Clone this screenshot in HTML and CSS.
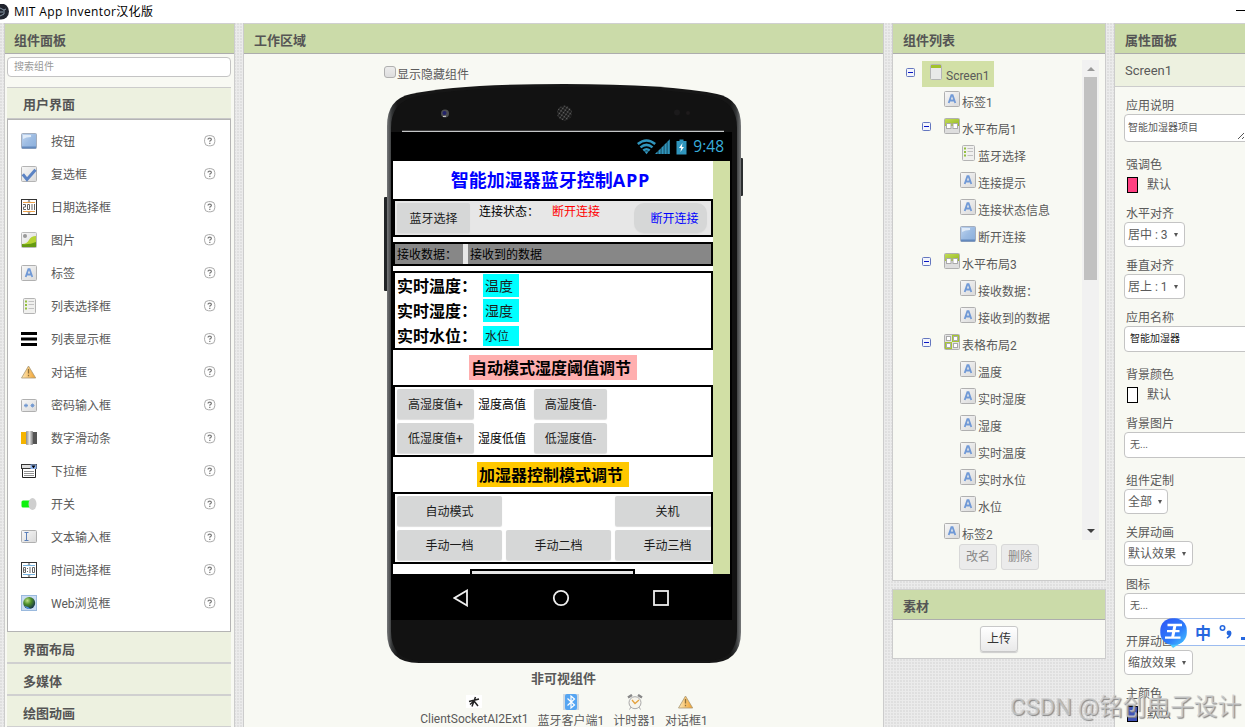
FILE: index.html
```html
<!DOCTYPE html>
<html lang="zh-CN">
<head>
<meta charset="utf-8">
<title>MIT App Inventor汉化版</title>
<link rel="stylesheet" href="styles.css">
</head>
<body>
<svg class="defs" width="0" height="0">
  <defs>
    <linearGradient id="gBlue" x1="0" y1="0" x2="1" y2="1"><stop offset="0" stop-color="#c3d7f0"/><stop offset=".5" stop-color="#9dbce3"/><stop offset="1" stop-color="#8aaedb"/></linearGradient>
    <linearGradient id="gGrey" x1="0" y1="0" x2="1" y2="1"><stop offset="0" stop-color="#f8f8f8"/><stop offset="1" stop-color="#d9d9d9"/></linearGradient>
    <linearGradient id="gWarn" x1="0" y1="0" x2="1" y2="0"><stop offset="0" stop-color="#ffe9b8"/><stop offset="1" stop-color="#f0a02c"/></linearGradient>
    <linearGradient id="gGreen" x1="0" y1="0" x2="1" y2="1"><stop offset="0" stop-color="#c2dc58"/><stop offset="1" stop-color="#95b91e"/></linearGradient>
    <linearGradient id="gKnob" x1="0" y1="0" x2="1" y2="0"><stop offset="0" stop-color="#8a8a8a"/><stop offset=".5" stop-color="#e6e6e6"/><stop offset="1" stop-color="#777"/></linearGradient>
    <radialGradient id="gGlobe" cx=".35" cy=".3" r=".8"><stop offset="0" stop-color="#bfe08a"/><stop offset=".4" stop-color="#4d8f28"/><stop offset="1" stop-color="#0c2450"/></radialGradient>
    <symbol id="i-button" viewBox="0 0 16 16"><rect x=".5" y=".5" width="15" height="15" rx="1" fill="url(#gBlue)" stroke="#a3adbd"/><path d="M1 14.5h14" stroke="#6389bd" stroke-width="2"/><path d="M2 2h8v2q-5 0-8 2z" fill="#e0ebf8"/></symbol>
    <symbol id="i-check" viewBox="0 0 16 16"><rect x=".5" y=".5" width="15" height="15" rx="1" fill="url(#gGrey)" stroke="#b4b4b4"/><path d="M1.8 8.2l4.2 5.2 8.5-9.6" fill="none" stroke="#5b83c4" stroke-width="3"/></symbol>
    <symbol id="i-date" viewBox="0 0 16 16"><rect x=".5" y=".5" width="15" height="15" fill="#fff" stroke="#333"/><path d="M2 3.5h12M2 12.500h12" stroke="#eba04a"/><path d="M6.500 2.500h3L8 1zM6.500 13.500h3L8 15z" fill="#444"/><path d="M2 5.500h2.500V8H2.500v2.500H5M6.500 5.500h2v5h-2zM11 5v6M13.500 5v6" fill="none" stroke="#666"/></symbol>
    <symbol id="i-time" viewBox="0 0 16 16"><rect x=".5" y=".5" width="15" height="15" fill="#fff" stroke="#333"/><path d="M2 3.500h12M2 12.500h12" stroke="#74b3e0"/><path d="M6.500 2.500h3L8 1zM6.500 13.500h3L8 15z" fill="#444"/><path d="M2.500 5.500h2v5h-2zM2.500 8h2M6.500 6v1M6.500 9v1M9 5v6M11.500 5.500h2v5h-2z" fill="none" stroke="#666"/></symbol>
    <symbol id="i-image" viewBox="0 0 16 16"><rect x=".5" y=".5" width="15" height="15" rx="1" fill="url(#gGrey)" stroke="#bbb"/><circle cx="4" cy="4" r="2" fill="#999"/><path d="M1 12q5 0 7-4t7-4v11H1z" fill="#b5d334"/><path d="M1 12q7 1 14-2v5H1z" fill="#659a13"/></symbol>
    <symbol id="i-label" viewBox="0 0 16 16"><rect x=".5" y=".5" width="15" height="15" rx="1" fill="url(#gGrey)" stroke="#b0b0b0"/><path d="M4.700 12L7.400 4.200h1.200L11.300 12M5.800 9.500h4.500" fill="none" stroke="#7099d6" stroke-width="1.800"/></symbol>
    <symbol id="i-list" viewBox="0 0 16 16"><rect x="2.500" y=".5" width="12" height="15" rx="1" fill="#f0f0ee" stroke="#b4b4b4"/><path d="M4 3.500h2M4 7h2M4 10.500h2" stroke="#93bf3e" stroke-width="2"/><path d="M7.500 3.500H13M7.500 6.500H13M7.500 10.500H13" stroke="#c2c2c2"/></symbol>
    <symbol id="i-lines" viewBox="0 0 16 16"><path d="M0 2.500h16M0 8h16M0 13.500h16" stroke="#000" stroke-width="3"/></symbol>
    <symbol id="i-warn" viewBox="0 0 16 16"><path d="M7.500 2L14.700 14H.5z" fill="url(#gWarn)" stroke="#a99873" stroke-width=".8"/><path d="M7.500 5v4.500M7.500 10.800v1.500" stroke="#8d713d" stroke-width="1.300"/></symbol>
    <symbol id="i-pass" viewBox="0 0 16 16"><rect x=".5" y="2.500" width="15" height="12" rx="1" fill="url(#gGrey)" stroke="#b0b0b0"/><path d="M3 8.500h4M5 6.500v4M3.600 7l2.800 3M6.400 7l-2.800 3M9.500 8.500h4M11.500 6.500v4M10.100 7l2.800 3M12.900 7l-2.800 3" stroke="#6e96d0" stroke-width=".9"/></symbol>
    <symbol id="i-slider" viewBox="0 0 16 16"><rect y="2" width="6" height="12" fill="#f5b400"/><rect x="10" y="2" width="6" height="12" fill="#555"/><rect x="5" y="1" width="7" height="14" rx="1" fill="url(#gKnob)"/></symbol>
    <symbol id="i-spin" viewBox="0 0 16 16"><rect x=".5" y="1.500" width="15" height="4" fill="#ddd" stroke="#333"/><rect x="9.500" y="1.500" width="6" height="4.500" fill="#8eb3ee"/><path d="M10.500 2.500h4l-2 3z" fill="#000"/><path d="M1.500 6v8.500h13V6" fill="#fff" stroke="#222"/><path d="M3 8.500h10M3 10.500h10M3 12.500h10" stroke="#777" stroke-width=".8"/></symbol>
    <symbol id="i-switch" viewBox="0 0 16 16"><rect x=".5" y="4.500" width="10" height="7" rx="1.500" fill="#0cf20c"/><ellipse cx="11.500" cy="8" rx="4" ry="6" fill="#cfcfcf"/></symbol>
    <symbol id="i-text" viewBox="0 0 16 16"><rect x=".5" y="1.500" width="15" height="12" rx="1" fill="url(#gGrey)" stroke="#b0b0b0"/><path d="M3.500 3.500h4M3.500 11.500h4M5.500 3.500v8" stroke="#5b7fb8" fill="none"/></symbol>
    <symbol id="i-web" viewBox="0 0 16 16"><rect x=".5" y=".5" width="15" height="15" fill="#c9dcf3" stroke="#9ab9dd"/><circle cx="8.200" cy="8" r="6" fill="url(#gGlobe)"/><path d="M3.500 11q4 .5 6 3-4 .6-6-3z" fill="#4f8ddd"/></symbol>
    <symbol id="i-screen" viewBox="0 0 16 16"><rect x="2.500" y=".5" width="11" height="15" rx="1" fill="#e9e9e9" stroke="#b4b4b4"/><rect x="3" y="1" width="10" height="3" fill="#a2c32b"/></symbol>
    <symbol id="i-horiz" viewBox="0 0 16 16"><rect x=".5" y=".5" width="15" height="15" rx="1" fill="#dedede" stroke="#b0b0b0"/><rect x="1" y="1" width="14" height="7" fill="url(#gGreen)"/><rect x="2.500" y="5.500" width="4.500" height="5" fill="#fff" stroke="#aaa"/><rect x="9" y="5.500" width="4.500" height="5" fill="#fff" stroke="#aaa"/></symbol>
    <symbol id="i-table" viewBox="0 0 16 16"><rect x=".5" y=".5" width="15" height="15" rx="1" fill="#e2e2e2" stroke="#b0b0b0"/><path d="M8 1h7v7H8zM1 8h7v7H1z" fill="#a6c832"/><g fill="#fff" stroke="#aaa"><rect x="2.500" y="2.500" width="4" height="4"/><rect x="9.500" y="2.500" width="4" height="4"/><rect x="2.500" y="9.500" width="4" height="4"/><rect x="9.500" y="9.500" width="4" height="4"/></g></symbol>
    <symbol id="i-help" viewBox="0 0 12 12"><rect x=".6" y=".6" width="10.200" height="10.200" rx="4" fill="#fff" stroke="#aaa"/><path d="M4 4.600q0-1.500 1.700-1.500t1.700 1.300q0 .8-1.500 1.700v.7M5.800 7.700v1.200" fill="none" stroke="#777" stroke-width="1.200"/></symbol>
    <symbol id="i-minus" viewBox="0 0 9 9"><rect x=".5" y=".5" width="8" height="8" rx="1" fill="#f3f5fb" stroke="#6577bf"/><path d="M2 4.500h5" stroke="#0a17c4"/></symbol>
  </defs>
</svg>

<header class="titlebar">
  <svg class="app-logo" width="12" height="16" viewBox="0 0 12 16"><circle cx="1" cy="7.500" r="8" fill="#20242e"/><path d="M0 4l4 2v4l-4 2M4 6l2-1M0 8h3" fill="none" stroke="#8595a4"/></svg>
  <span>MIT App Inventor汉化版</span>
  <i class="minimise"></i>
</header>

<main class="workspace">
  <section class="panel palette">
    <h2 class="panel-head">组件面板</h2>
    <div class="search">搜索组件</div>
    <h3 class="category open">用户界面</h3>
    <ul class="components">
      <li><svg><use href="#i-button"/></svg><span>按钮</span><svg class="help"><use href="#i-help"/></svg></li>
      <li><svg><use href="#i-check"/></svg><span>复选框</span><svg class="help"><use href="#i-help"/></svg></li>
      <li><svg><use href="#i-date"/></svg><span>日期选择框</span><svg class="help"><use href="#i-help"/></svg></li>
      <li><svg><use href="#i-image"/></svg><span>图片</span><svg class="help"><use href="#i-help"/></svg></li>
      <li><svg><use href="#i-label"/></svg><span>标签</span><svg class="help"><use href="#i-help"/></svg></li>
      <li><svg><use href="#i-list"/></svg><span>列表选择框</span><svg class="help"><use href="#i-help"/></svg></li>
      <li><svg><use href="#i-lines"/></svg><span>列表显示框</span><svg class="help"><use href="#i-help"/></svg></li>
      <li><svg><use href="#i-warn"/></svg><span>对话框</span><svg class="help"><use href="#i-help"/></svg></li>
      <li><svg><use href="#i-pass"/></svg><span>密码输入框</span><svg class="help"><use href="#i-help"/></svg></li>
      <li><svg><use href="#i-slider"/></svg><span>数字滑动条</span><svg class="help"><use href="#i-help"/></svg></li>
      <li><svg><use href="#i-spin"/></svg><span>下拉框</span><svg class="help"><use href="#i-help"/></svg></li>
      <li><svg><use href="#i-switch"/></svg><span>开关</span><svg class="help"><use href="#i-help"/></svg></li>
      <li><svg><use href="#i-text"/></svg><span>文本输入框</span><svg class="help"><use href="#i-help"/></svg></li>
      <li><svg><use href="#i-time"/></svg><span>时间选择框</span><svg class="help"><use href="#i-help"/></svg></li>
      <li><svg><use href="#i-web"/></svg><span>Web浏览框</span><svg class="help"><use href="#i-help"/></svg></li>
    </ul>
    <h3 class="category">界面布局</h3>
    <h3 class="category">多媒体</h3>
    <h3 class="category">绘图动画</h3>
  </section>

  <section class="panel viewer">
    <h2 class="panel-head">工作区域</h2>
    <div class="show-hidden"><i class="checkbox"></i><span>显示隐藏组件</span></div>
    <div class="phone">
      <svg class="phone-body" width="360" height="580" viewBox="0 0 360 580">
        <defs>
          <linearGradient id="gEdge" x1="0" y1="0" x2="1" y2="0"><stop offset="0" stop-color="#77797a"/><stop offset=".014" stop-color="#333536"/><stop offset=".03" stop-color="#161616"/><stop offset=".97" stop-color="#161616"/><stop offset=".986" stop-color="#333536"/><stop offset="1" stop-color="#77797a"/></linearGradient>
          <pattern id="pGrille" width="3" height="3" patternUnits="userSpaceOnUse" patternTransform="rotate(35)"><rect width="3" height="3" fill="#111"/><circle cx="1.500" cy="1.500" r=".9" fill="#6c6c6c"/></pattern>
        </defs>
        <rect x="0" y="113" width="5" height="94" rx="1" fill="#222526"/>
        <rect x="354" y="74" width="5" height="38" rx="1" fill="#2a2d2e"/>
        <path d="M3 42Q3 15 27 10Q75 0 180 0Q285 0 333 10Q357 15 357 42V548Q357 579 325 579H35Q3 579 3 548Z" fill="url(#gEdge)"/>
        <path d="M7 44Q7 19 30 13Q78 3 180 3Q282 3 330 13Q353 19 353 44V547Q353 577 322 577H38Q7 577 7 547Z" fill="#121212"/>
        <path d="M18 47.500H340" stroke="#c5c7c8" stroke-width="1.500"/>
        <circle cx="61" cy="29.500" r="4" fill="#4d4e50"/><circle cx="60.500" cy="29" r="2" fill="#22226a"/><path d="M59 32.500l3-.2" stroke="#ccc"/>
        <circle cx="180.500" cy="29" r="7.500" fill="url(#pGrille)"/>
        <circle cx="293" cy="28.500" r="3" fill="#1b1a1b"/><circle cx="304" cy="29" r="2" fill="#1e1b1c"/>
      </svg>
      <div class="screen-stack">
        <div class="status">
          <svg width="50" height="16" viewBox="0 0 50 16"><g fill="none" stroke="#3095bd" stroke-width="2.500"><path d="M.8 5q8.700-7 17.400 0M3.500 8.400q6-5 12 0M6.300 11.500q3.200-2.600 6.400 0"/></g><path d="M7.300 12.300h4.400l-2.200 2.900z" fill="#3095bd"/><g fill="#3095bd"><path d="M18 15l2.700-2.700V15zM21.300 11.700l2.500-2.500V15h-2.500zM24.300 8.700l2.500-2.500V15h-2.500zM27.300 5.700l2.500-2.500V15h-2.500zM30.300 2.700l2.500-2.500V15h-2.500z"/><path d="M39.500 2h3V.5h4V2h3v13.500h-10z"/></g><path d="M45.500 4l-3.500 5h2.200l-.8 4L47 8h-2.200z" fill="#fff"/></svg>
          <span>9:48</span>
        </div>
        <div class="form">
          <div class="canvas">
            <div class="app-title">智能加湿器蓝牙控制<span>APP</span></div>
            <div class="box connect">
              <span class="btn w73">蓝牙选择</span><span class="state">连接状态：</span><span class="state off">断开连接</span><span class="btn round">断开连接</span>
            </div>
            <div class="box receive"><span class="rx-label">接收数据：</span><span class="rx-value">接收到的数据</span></div>
            <div class="box readings">
              <div><b>实时温度：</b><span class="value">温度</span></div>
              <div><b>实时湿度：</b><span class="value">湿度</span></div>
              <div><b>实时水位：</b><span class="value small">水位</span></div>
            </div>
            <div class="tag pink">自动模式湿度阈值调节</div>
            <div class="box grid thresholds">
              <span class="btn">高湿度值+</span><span class="plain">湿度高值</span><span class="btn">高湿度值-</span>
              <span class="btn">低湿度值+</span><span class="plain">湿度低值</span><span class="btn">低湿度值-</span>
            </div>
            <div class="tag amber">加湿器控制模式调节</div>
            <div class="box grid modes">
              <span class="btn">自动模式</span><span></span><span class="btn">关机</span>
              <span class="btn">手动一档</span><span class="btn">手动二档</span><span class="btn">手动三档</span>
            </div>
            <div class="box cut"></div>
          </div>
        </div>
        <div class="nav">
          <svg width="16" height="18" viewBox="0 0 16 18"><path d="M14 1.500v15L1.500 9z"/></svg>
          <svg width="18" height="18" viewBox="0 0 18 18"><circle cx="9" cy="9" r="7.200"/></svg>
          <svg width="16" height="18" viewBox="0 0 16 18"><rect x="1" y="2" width="14" height="14"/></svg>
        </div>
      </div>
    </div>
    <div class="nonvisible-title">非可视组件</div>
    <div class="nonvisible">
      <div class="ext"><svg viewBox="0 0 16 16"><rect y="1" width="16" height="13" fill="#fff"/><path d="M3 7.500l10-2.500M9.500 3L8 7l-2 5.500M8 7l4 5M4 10.500L8 7" stroke="#222" stroke-width="1.500" fill="none"/></svg><span>ClientSocketAI2Ext1</span></div>
      <div><svg viewBox="0 0 16 16"><rect width="16" height="16" fill="#cfd9e2"/><rect x="2" width="12" height="16" rx="2" fill="#55a5f2"/><path d="M4.500 4.500l7 6.500L8 14V2l3.500 3-7 6.500" fill="none" stroke="#fff" stroke-width="1.200"/></svg><span>蓝牙客户端1</span></div>
      <div><svg viewBox="0 0 16 16"><path d="M1 3.500L5 1M15 3.500L11 1" stroke="#888" stroke-width="2.500"/><path d="M4 13l-1.500 2.500M12 13l1.500 2.500" stroke="#aaa"/><circle cx="8" cy="8.700" r="6" fill="#f6f4ec" stroke="#aaa"/><path d="M5 6l3 3.500L12 6" fill="none" stroke="#e4a13d" stroke-width="1.300"/></svg><span>计时器1</span></div>
      <div><svg><use href="#i-warn"/></svg><span>对话框1</span></div>
    </div>
  </section>

  <div class="side">
    <section class="panel tree-panel">
      <h2 class="panel-head">组件列表</h2>
      <div class="tree-wrap">
        <ul class="tree">
          <li class="root"><svg class="minus"><use href="#i-minus"/></svg><div class="selected"><svg><use href="#i-screen"/></svg><span>Screen1</span></div></li>
          <li class="l1"><svg><use href="#i-label"/></svg><span>标签1</span></li>
          <li class="l1 branch"><svg class="minus"><use href="#i-minus"/></svg><svg><use href="#i-horiz"/></svg><span>水平布局1</span></li>
          <li class="l2"><svg><use href="#i-list"/></svg><span>蓝牙选择</span></li>
          <li class="l2"><svg><use href="#i-label"/></svg><span>连接提示</span></li>
          <li class="l2"><svg><use href="#i-label"/></svg><span>连接状态信息</span></li>
          <li class="l2"><svg><use href="#i-button"/></svg><span>断开连接</span></li>
          <li class="l1 branch"><svg class="minus"><use href="#i-minus"/></svg><svg><use href="#i-horiz"/></svg><span>水平布局3</span></li>
          <li class="l2"><svg><use href="#i-label"/></svg><span>接收数据：</span></li>
          <li class="l2"><svg><use href="#i-label"/></svg><span>接收到的数据</span></li>
          <li class="l1 branch"><svg class="minus"><use href="#i-minus"/></svg><svg><use href="#i-table"/></svg><span>表格布局2</span></li>
          <li class="l2"><svg><use href="#i-label"/></svg><span>温度</span></li>
          <li class="l2"><svg><use href="#i-label"/></svg><span>实时湿度</span></li>
          <li class="l2"><svg><use href="#i-label"/></svg><span>湿度</span></li>
          <li class="l2"><svg><use href="#i-label"/></svg><span>实时温度</span></li>
          <li class="l2"><svg><use href="#i-label"/></svg><span>实时水位</span></li>
          <li class="l2"><svg><use href="#i-label"/></svg><span>水位</span></li>
          <li class="l1"><svg><use href="#i-label"/></svg><span>标签2</span></li>
        </ul>
        <div class="scrollbar"><i class="up"></i><i class="thumb"></i><i class="down"></i></div>
      </div>
      <div class="tree-actions"><span class="button disabled">改名</span><span class="button disabled">删除</span></div>
    </section>
    <section class="panel media-panel">
      <h2 class="panel-head">素材</h2>
      <div class="media-body"><span class="button">上传</span></div>
    </section>
  </div>

  <section class="panel properties">
    <h2 class="panel-head">属性面板</h2>
    <div class="prop-target">Screen1</div>
    <div class="props">
      <label>应用说明</label><div class="field area">智能加湿器项目<svg width="8" height="8" viewBox="0 0 8 8"><path d="M1 7l6-6M5 7l2-2" stroke="#555"/></svg></div>
      <label>强调色</label><div class="color"><i class="accent"></i>默认</div>
      <label>水平对齐</label><div class="select">居中 : 3<b></b></div>
      <label>垂直对齐</label><div class="select">居上 : 1<b></b></div>
      <label>应用名称</label><div class="field dark">智能加湿器</div>
      <label>背景颜色</label><div class="color"><i class="white"></i>默认</div>
      <label>背景图片</label><div class="field">无...</div>
      <label>组件定制</label><div class="select tight">全部<b></b></div>
      <label>关屏动画</label><div class="select">默认效果<b></b></div>
      <label>图标</label><div class="field">无...</div>
      <label>开屏动画</label><div class="select">缩放效果<b></b></div>
      <label>主颜色</label><div class="color"><i class="primary"></i>默认</div>
    </div>
  </section>
</main>

<div class="ime">
  <svg width="28" height="30" viewBox="0 0 28 30"><defs><linearGradient id="gIme" x1="0" y1="0" x2="1" y2="1"><stop offset="0" stop-color="#2f55f5"/><stop offset=".6" stop-color="#2e7dfb"/><stop offset="1" stop-color="#45c8ff"/></linearGradient></defs><path d="M8 24l5 6 9-6z" fill="#49c8ff"/><rect x=".3" y=".3" width="26.500" height="26.500" rx="12" fill="url(#gIme)"/><path d="M7.500 7h14.500M7 13.200h12.500M5 19.700h15.500" fill="none" stroke="#fff" stroke-width="2.300"/><path d="M15 7l-2.400 12.500" stroke="#fff" stroke-width="3"/></svg>
  <div class="ime-bar"><span>中</span><svg width="14" height="16" viewBox="0 0 14 16"><circle cx="3.500" cy="4" r="2.200" fill="none" stroke="#2567df" stroke-width="1.600"/><circle cx="10" cy="9" r="2.400" fill="#2567df"/><path d="M12.200 8.500q.8 4-4 6.200l-.6-1.200q2.600-1.600 2.400-4z" fill="#2567df"/></svg><i></i></div>
</div>
<div class="watermark">CSDN @铭创电子设计</div>
</body>
</html>
```
FILE: styles.css
```css
* { box-sizing: border-box; }

body {
  margin: 0;
  width: 1245px;
  height: 727px;
  overflow: hidden;
  position: relative;
  font: 12px/18px Roboto, "Noto Sans CJK SC", sans-serif;
  color: #5a5a5a;
  background: #fff;
}

h2, h3, ul { margin: 0; padding: 0; list-style: none; }
svg { display: block; flex: none; }
.defs { position: absolute; }

.titlebar {
  display: flex;
  align-items: center;
  height: 23px;
  color: #000;
  font: 12px/18px "Open Sans", "Noto Sans CJK SC", sans-serif;
  letter-spacing: .36px;
}
.app-logo { margin-right: 2px; }
.minimise { width: 9px; height: 1px; margin: -2px 0 0 auto; background: #000; }

.workspace {
  display: flex;
  gap: 8px;
  height: 704px;
  padding-left: 4px;
  overflow: hidden;
  background:
    radial-gradient(circle at 1px 1px, #d6d6d6 .5px, transparent 1px) 0 0 / 3px 3px,
    #ebebeb;
}

.panel {
  flex: none;
  background: #f8f9f3;
  border: 1px solid #ccc;
  border-width: 0 1px;
}
.panel-head {
  height: 31px;
  padding-left: 10px;
  border-top: 1px solid #d0d0d0;
  border-bottom: 1px solid #adadad;
  background: #cbdba9;
  color: #555;
  font-size: 13px;
  font-weight: 700;
  line-height: 33px;
}

/* palette */
.palette { width: 231px; padding: 0 3px 0 2px; }
.palette .panel-head { margin: 0 -3px 0 -2px; padding-left: 9px; }
.search {
  height: 20px;
  margin: 3px 0 10px;
  padding-left: 6px;
  border: 1px solid #c4c4c4;
  border-radius: 4px;
  background: #fff;
  color: #999;
  font-size: 10px;
  line-height: 18px;
}
.category {
  height: 32px;
  padding-left: 16px;
  border-bottom: 2px solid #d0d0d0;
  background: #edf1e0;
  color: #555;
  font-size: 13px;
  line-height: 35px;
}
.category.open { border-top: 1px solid #ccc; border-bottom: 1px solid #c8c8c8; line-height: 34px; }
.components {
  height: 513px;
  padding: 4px 0;
  border: 1px solid #b4b4b4;
  background: #fff;
}
.components li { display: flex; align-items: center; height: 33px; padding: 0 14px 0 13px; }
.components span { padding-top: 2px; }
.components svg { width: 16px; height: 16px; margin-right: 14px; }
.components .help { width: 12px; height: 12px; margin: 0 0 0 auto; }

/* viewer */
.viewer { width: 641px; }
.show-hidden { display: flex; height: 30px; padding: 12px 0 0 140px; }
.checkbox {
  width: 12px;
  height: 12px;
  margin-right: 1px;
  border: 1px solid #b0b0b0;
  border-radius: 3px;
  background: linear-gradient(#ececec, #dedede);
}
.phone { position: relative; width: 360px; height: 579px; margin-left: 140px; padding: 48px 0 0 7px; }
.phone-body { position: absolute; left: 0; top: 0; }
.screen-stack { position: relative; width: 341px; height: 488px; background: #000; }
.status {
  display: flex;
  align-items: center;
  justify-content: flex-end;
  gap: 6px;
  height: 29px;
  padding-right: 8px;
  color: #38aedb;
  font: 15.5px/29px "Open Sans", sans-serif;
}
.form { width: 337px; height: 413px; margin-left: 2px; padding-right: 17px; background: #d1dfa5; overflow: hidden; }
.canvas { display: flex; flex-direction: column; align-items: center; gap: 5px; height: 413px; background: #fff; color: #000; overflow: hidden; }
.app-title { height: 33px; padding-right: 5px; color: #00f; font: 700 18px/39px "Open Sans", "Noto Sans CJK SC", sans-serif; }
.app-title span { letter-spacing: .8px; }
.box { flex: none; display: flex; width: 320px; border: 2px solid #000; overflow: hidden; }
.btn {
  height: 30px;
  border-radius: 2px;
  background: #d6d7d7;
  box-shadow: 0 1px 1px #ddd;
  color: #1b1b1b;
  line-height: 33px;
  text-align: center;
}
.w73 { width: 73px; }
.connect { height: 38px; padding: 2px; background: #e7e7e7; }
.state { width: 73px; margin-left: 9px; white-space: nowrap; }
.state.off { width: 82px; margin-left: 0; color: #f00; }
.btn.round { width: 73px; padding-left: 8px; border-radius: 10px; color: #00f; }
.receive { height: 24px; background: #878787; line-height: 23px; }
.rx-label { width: 73px; padding-left: 2px; border-right: 5px solid #e7e7e7; }
.rx-value { padding-left: 2px; }
.readings { display: block; height: 79px; padding: 0 2px; }
.readings div { display: flex; align-items: center; height: 25px; }
.readings b { width: 86px; height: 24px; font-size: 16px; line-height: 26px; white-space: nowrap; }
.value { width: 36px; height: 23px; padding-left: 2px; background: #0ff; color: #1b1b1b; font-size: 14px; line-height: 25px; }
.value.small { height: 20px; font-size: 12px; line-height: 22px; }
.tag { flex: none; height: 25px; padding: 0 0 0 2px; color: #000; font-size: 16px; font-weight: 700; line-height: 27px; }
.pink { width: 168px; background: #ffafaf; }
.amber { width: 152px; background: #ffc800; }
.grid { display: grid; height: 72px; padding: 2px; grid-template-rows: 30px 30px; gap: 4px; }
.thresholds { grid-template-columns: 77px 52px 73px; line-height: 33px; }
.modes { grid-template-columns: 105px 105px 105px; }
.box.cut { width: 165px; height: 38px; margin-right: 1px; background: #e7e7e7; }
.nav { display: flex; align-items: center; justify-content: center; gap: 83px; height: 46px; padding: 2px 2px 0 0; }
.nav svg { fill: none; stroke: #eee; stroke-width: 1.8; }
.nonvisible-title { height: 31px; font-size: 13px; font-weight: 700; line-height: 32px; text-align: center; }
.nonvisible { display: flex; justify-content: center; gap: 9px; padding-left: 1px; line-height: 16px; }
.nonvisible > div { display: flex; flex-direction: column; align-items: center; gap: 3px; white-space: nowrap; }
.nonvisible svg { width: 16px; height: 16px; }
.nonvisible .ext { gap: 1px; }

/* component tree */
.side { flex: none; display: flex; flex-direction: column; gap: 8px; width: 214px; }
.tree-panel { height: 558px; border-bottom-width: 1px; }
.tree-wrap { display: flex; height: 487px; padding: 6px 6px 0 13px; }
.tree { flex: 1; }
.tree li { display: flex; height: 27px; padding-top: 3px; }
.tree svg { width: 16px; height: 16px; }
.tree span { margin: 3px 0 0 2px; line-height: 18px; white-space: nowrap; }
.tree .minus { width: 9px; height: 9px; margin: 4px 13px 0 0; }
.tree .root { height: 28px; padding-top: 1px; }
.tree .root .minus { margin: 7px 7px 0 0; }
.tree .l1 { padding-left: 38px; }
.tree .l1.branch { padding-left: 16px; }
.tree .l2 { padding-left: 54px; }
.selected { display: flex; height: 26px; width: 72px; padding: 3px 0 0 6px; background: #d2e0a6; }
.selected span { margin: 3px 0 0 2px; font-size: 12px; }
.scrollbar { display: flex; flex-direction: column; align-items: center; width: 17px; height: 480px; background: #f1f1f1; }
.up, .down { width: 0; height: 0; border: 4px solid transparent; }
.up { margin: 3px 0 6px; border-bottom-color: #999; }
.thumb { width: 13px; height: 203px; margin-top: 0; background: #c1c1c1; }
.down { margin: auto 0 7px; border-top-color: #404040; border-bottom: 0; }
.tree-actions { display: flex; gap: 4px; padding: 3px 0 0 66px; }
.button {
  width: 38px;
  height: 26px;
  border: 1px solid #c8c8c8;
  border-radius: 3px;
  background: linear-gradient(#fff, #e9e9e9);
  box-shadow: 0 1px 1px #ccc;
  color: #333;
  line-height: 25px;
  text-align: center;
}
.button.disabled { background: #ebebeb; border-color: #d8d8d8; box-shadow: none; color: #888; line-height: 25px; }
.media-panel { height: 70px; border-bottom-width: 1px; }
.media-body { display: flex; justify-content: center; padding-top: 6px; }

/* properties */
.properties { width: 150px; }
.prop-target { height: 33px; padding-left: 10px; border-bottom: 1px solid #ccc; background: #edf1e0; font-size: 13px; line-height: 33px; }
.props { display: flex; flex-direction: column; align-items: flex-start; padding: 9px 0 0 9px; }
.props label { height: 18px; padding-left: 2px; line-height: 20px; }
.field, .select { border: 1px solid #c4c4c4; border-radius: 4px; background: #fff; white-space: nowrap; }
.field { width: 140px; height: 26px; margin-bottom: 13px; padding-left: 5px; font-size: 10px; line-height: 24px; }
.field.dark { color: #222; }
.field.area { display: flex; align-items: flex-end; height: 28px; padding-left: 3px; line-height: 27px; }
.field.area svg { margin: 0 0 1px 39px; }
.select { display: flex; align-items: center; gap: 6px; height: 25px; margin-bottom: 9px; padding: 0 6px 0 3px; }
.select.tight { padding-right: 5px; }
.select b { border: 2.5px solid transparent; border-top: 4px solid #555; border-bottom: 0; }
.color { display: flex; align-items: center; height: 22px; margin-bottom: 9px; padding: 2px 0 0 3px; }
.color i { width: 11px; height: 16px; margin-right: 9px; border: 1px solid #000; }
.accent { background: #ff4081; }
.white { background: #fff; }
.primary { background: #3f51b5; }

/* floating input-method bar and page watermark */
.ime { position: absolute; left: 1160px; top: 618px; display: flex; width: 85px; overflow: hidden; }
.ime > svg { position: relative; z-index: 1; }
.ime-bar {
  display: flex;
  align-items: center;
  gap: 8px;
  width: 80px;
  height: 28px;
  margin-left: -14px;
  padding-left: 20px;
  border: 1px solid #9cbcf0;
  background: #fff;
  color: #2567df;
  font: 700 16px/26px "Noto Sans CJK SC", sans-serif;
}
.ime-bar i { width: 8px; height: 3px; margin-top: 12px; background: #2567df; }
.watermark {
  position: absolute;
  left: 1010px;
  top: 692px;
  color: rgba(205, 205, 205, .75);
  font: 23.7px/30px Roboto, "Noto Sans CJK SC", sans-serif;
  text-shadow: 1px 1px 1px #888;
  white-space: nowrap;
}
```
